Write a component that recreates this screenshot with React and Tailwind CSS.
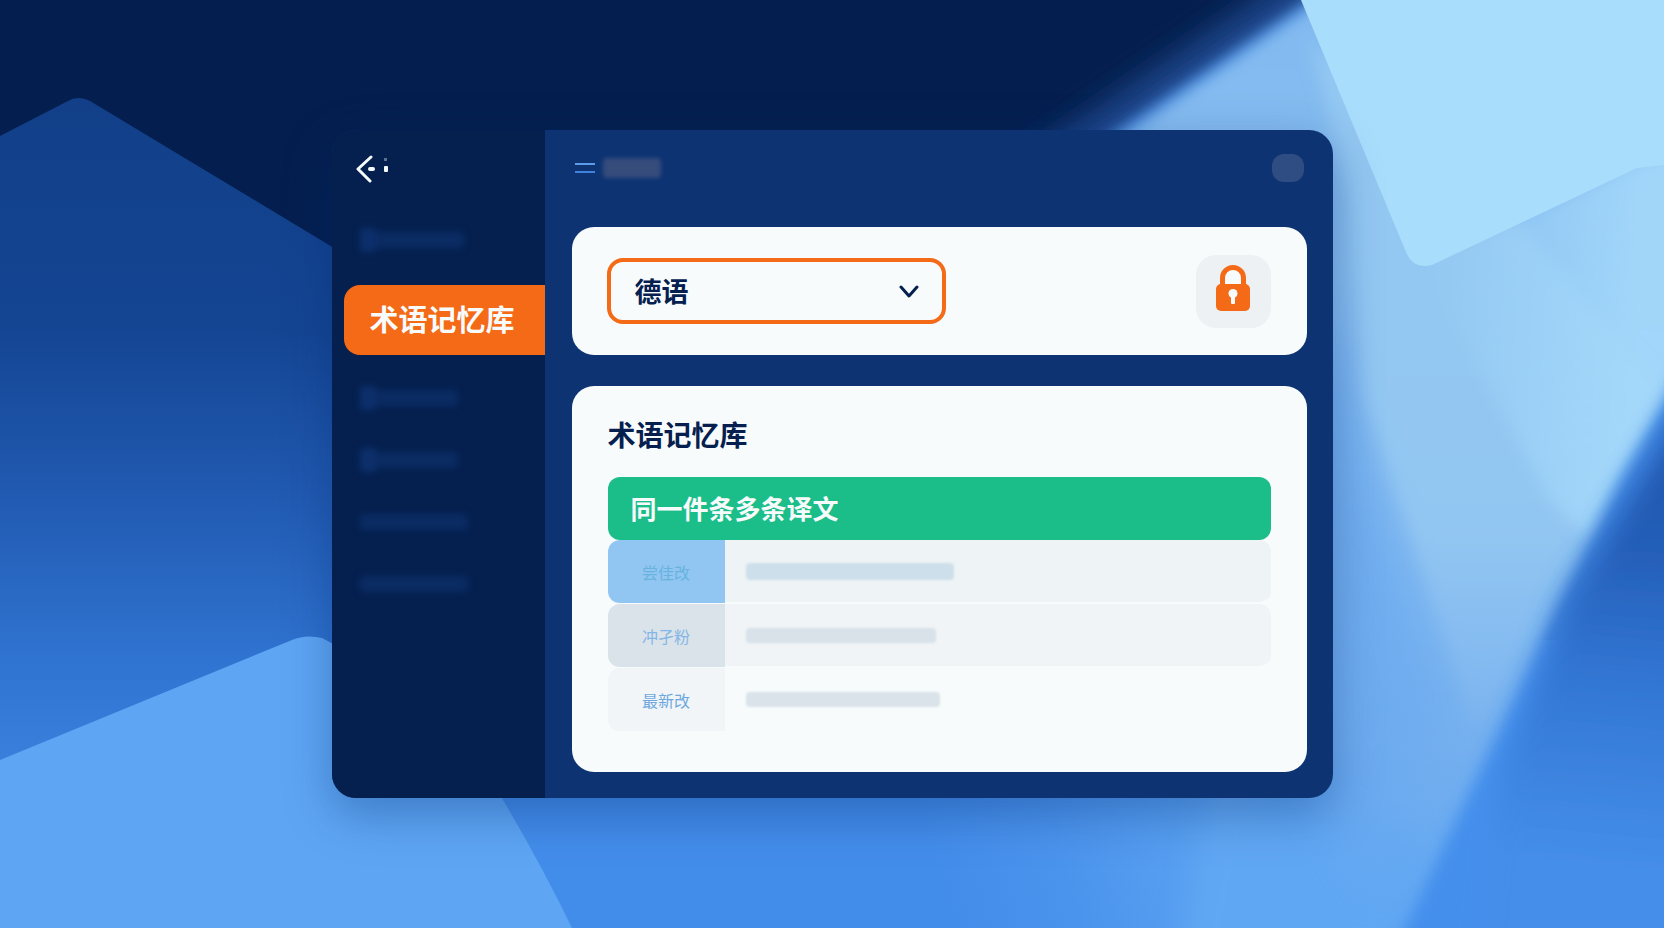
import React, { useState } from "react";

const navTop = [{ id: "nav-1", width: "w-[104px]", badge: true }];

const navBottom = [
  { id: "nav-2", width: "w-[98px]", badge: true },
  { id: "nav-3", width: "w-[98px]", badge: true },
  { id: "nav-4", width: "w-[108px]", badge: false },
  { id: "nav-5", width: "w-[108px]", badge: false },
];

const rows = [
  {
    id: "row-1",
    label: "尝佳改",
    labelClass: "bg-[#92c6f2] text-[#67b3de]",
    valueClass: "bg-[#eef3f5]",
    barClass: "w-[208px] h-[17px] bg-[#cddfeb]",
  },
  {
    id: "row-2",
    label: "冲孑粉",
    labelClass: "bg-[#d9e3e9] text-[#85b6e6]",
    valueClass: "bg-[#f0f4f6]",
    barClass: "w-[190px] h-[15px] bg-[#d8e2e8]",
  },
  {
    id: "row-3",
    label: "最新改",
    labelClass: "bg-[#f1f5f7] text-[#6fa8e0]",
    valueClass: "",
    barClass: "w-[194px] h-[15px] bg-[#dae3e9]",
  },
];

const Backdrop = () => (
  <svg
    className="absolute inset-0 -z-10 h-full w-full"
    viewBox="0 0 1664 928"
    preserveAspectRatio="xMidYMid slice"
    aria-hidden="true"
  >
    <defs>
      <linearGradient id="hill" x1="0" y1="98" x2="0" y2="760" gradientUnits="userSpaceOnUse">
        <stop offset="0" stopColor="#123f88" />
        <stop offset="0.35" stopColor="#144593" />
        <stop offset="0.62" stopColor="#225cb4" />
        <stop offset="0.85" stopColor="#3074d1" />
        <stop offset="1" stopColor="#397fdb" />
      </linearGradient>
      <linearGradient id="floor" x1="960" y1="960" x2="1260" y2="880" gradientUnits="userSpaceOnUse">
        <stop offset="0" stopColor="#438dea" />
        <stop offset="0.4" stopColor="#4b94ed" />
        <stop offset="1" stopColor="#5ea6f3" />
      </linearGradient>
      <linearGradient id="beam" x1="1400" y1="0" x2="1330" y2="928" gradientUnits="userSpaceOnUse">
        <stop offset="0" stopColor="#82baf0" />
        <stop offset="0.5" stopColor="#8ac0f1" />
        <stop offset="0.8" stopColor="#74afef" />
        <stop offset="1" stopColor="#60a6f3" />
      </linearGradient>
      <linearGradient id="wedge" x1="0" y1="300" x2="0" y2="760" gradientUnits="userSpaceOnUse">
        <stop offset="0" stopColor="#93c8f2" />
        <stop offset="0.5" stopColor="#92c6f2" />
        <stop offset="1" stopColor="#78b1ef" />
      </linearGradient>
      <linearGradient id="deep" x1="1640" y1="440" x2="1600" y2="860" gradientUnits="userSpaceOnUse">
        <stop offset="0" stopColor="#1f57ae" />
        <stop offset="0.25" stopColor="#245eb8" />
        <stop offset="0.55" stopColor="#3175d2" />
        <stop offset="1" stopColor="#448ee9" />
      </linearGradient>
      <linearGradient id="glow" x1="1430" y1="320" x2="1630" y2="330" gradientUnits="userSpaceOnUse">
        <stop offset="0" stopColor="#a8dcfc" stopOpacity="0" />
        <stop offset="1" stopColor="#a8dcfc" stopOpacity="0.8" />
      </linearGradient>
      <filter id="soft8" x="-20%" y="-20%" width="140%" height="140%">
        <feGaussianBlur stdDeviation="8" />
      </filter>
      <filter id="soft14" x="-20%" y="-20%" width="140%" height="140%">
        <feGaussianBlur stdDeviation="14" />
      </filter>
      <filter id="soft24" x="-30%" y="-30%" width="160%" height="160%">
        <feGaussianBlur stdDeviation="24" />
      </filter>
    </defs>

    <rect width="1664" height="928" fill="#041f4f" />
    <path d="M0 136 L68 101 Q78 95 90 101 L480 336 V928 H0 Z" fill="url(#hill)" />
    <rect x="440" y="640" width="1224" height="288" fill="url(#floor)" />

    {/* bright beam on the right */}
    <path d="M1330 -50 L990 180 L1180 400 L1500 0 Z" fill="#1c4488" filter="url(#soft14)" />
    <path d="M1385 -50 L1075 160 L1180 400 L1500 0 Z" fill="#3478d6" filter="url(#soft8)" />
    <g filter="url(#soft8)">
      <path d="M1390 -50 L1100 150 L1180 400 V700 L1240 860 L1200 960 H1390 L1760 240 V-50 Z" fill="url(#beam)" />
    </g>
    <path d="M1210 800 L1340 760 L1420 860 L1390 960 H1180 Z" fill="#61a7f3" filter="url(#soft14)" />
    <path d="M1333 300 L1440 700 L1380 900 L1320 800 L1300 400 Z" fill="#6caaf0" opacity="0.8" filter="url(#soft24)" />
    <path d="M1310 40 L1350 200 L1366 400 L1476 730 L1670 400 L1500 200 Z" fill="url(#wedge)" filter="url(#soft8)" />
    <path d="M1425 266 L1640 160 L1700 140 V340 L1590 540 L1550 500 Z" fill="url(#glow)" filter="url(#soft8)" />
    <path d="M1301 0 L1406 252 Q1413 270 1432 265 L1637 168 L1664 165 V0 Z" fill="#a9ddfc" />
    <g filter="url(#soft8)">
      <path d="M1700 340 L1620 480 L1500 730 L1390 960 H1700 Z" fill="#458fec" />
    </g>
    <g filter="url(#soft14)">
      <path d="M1720 350 L1644 470 L1565 600 L1500 780 L1480 960 H1720 Z" fill="url(#deep)" />
    </g>

    {/* lower left slab */}
    <path d="M0 760 L292 640 Q306 634 322 638 L440 700 Q520 820 572 928 H0 Z" fill="#5ea6f4" />
  </svg>
);

const BackIcon = () => (
  <svg width="36" height="28" viewBox="0 0 36 28" fill="none" stroke="#f7fbfc" strokeLinecap="round" strokeLinejoin="round">
    <path d="M15 2 L2 14 L14 26" strokeWidth="3" />
    <path d="M14 14 H17" strokeWidth="4" />
    <rect x="28" y="11" width="4" height="6" rx="1" fill="#f7fbfc" stroke="none" />
    <rect x="28" y="3" width="3" height="3" fill="#5d6f93" stroke="none" />
  </svg>
);

const LockIcon = () => (
  <svg className="-mt-1" width="36" height="48" viewBox="0 0 36 48" fill="none">
    <path d="M7.500 24 V13 a10.500 10.500 0 0 1 21 0 V24" fill="#f7fbfc" stroke="#f46a17" strokeWidth="5" />
    <rect x="1" y="19" width="34" height="27" rx="5" fill="#f46a17" />
    <circle cx="18" cy="28.500" r="4.500" fill="#f7fbfc" />
    <rect x="16" y="29" width="4" height="10" rx="1" fill="#f7fbfc" />
  </svg>
);

const GhostItem = ({ width, badge }) => (
  <li className="flex h-[62px] items-center pl-7">
    <span className={`relative block h-4 rounded bg-[#0a2b63] blur-[3px] ${width}`}>
      {badge && <span className="absolute -top-1 left-0 h-6 w-4 rounded bg-[#0c2f6b]" />}
    </span>
  </li>
);

const Sidebar = () => (
  <aside className="w-[213px] shrink-0 bg-[#05204f]">
    <button type="button" aria-label="返回" className="mt-[25px] ml-6 block">
      <BackIcon />
    </button>
    <nav className="mt-[26px]">
      <ul>
        {navTop.map((item) => (
          <GhostItem key={item.id} width={item.width} badge={item.badge} />
        ))}
        <li className="mt-3.5 mb-3 pl-3">
          <a
            href="#memory"
            aria-current="page"
            className="flex h-[70px] items-center rounded-l-2xl bg-[#f46a17] pb-0.5 pl-[26px] text-[29px] font-bold text-[#f7fbfc]"
          >
            术语记忆库
          </a>
        </li>
        {navBottom.map((item) => (
          <GhostItem key={item.id} width={item.width} badge={item.badge} />
        ))}
      </ul>
    </nav>
  </aside>
);

const App = () => {
  const [language, setLanguage] = useState("de");

  return (
    <div className="relative isolate flex min-h-screen items-center justify-center overflow-hidden px-6 py-10 font-['Noto_Sans_CJK_SC',sans-serif]">
      <Backdrop />

      <div className="flex w-full max-w-[1001px] overflow-hidden rounded-3xl bg-[#0d3373] shadow-[0_16px_48px_rgba(4,40,110,0.35)]">
        <Sidebar />

        <div className="min-w-0 flex-1 pt-6 pr-[26px] pb-[26px] pl-[27px]">
          <header className="flex h-7 items-center justify-between px-[3px]">
            <div className="flex items-center gap-2">
              <button type="button" aria-label="菜单" className="flex w-5 flex-col gap-1.5">
                <span className="h-0.5 w-full bg-[#5a9ce8]" />
                <span className="h-0.5 w-full bg-[#3f83dc]" />
              </button>
              <span className="h-5 w-[58px] rounded bg-[#364d7c] blur-[2px]" />
            </div>
            <span className="h-7 w-8 rounded-xl bg-[#2f4d82]" />
          </header>

          <main className="mt-[45px] space-y-[31px]">
            <section className="flex h-32 items-center justify-between rounded-[22px] bg-[#f7fbfc] pr-9 pl-[35px]">
              <div className="relative w-[339px]">
                <select
                  aria-label="语言"
                  value={language}
                  onChange={(e) => setLanguage(e.target.value)}
                  className="h-[66px] w-full appearance-none rounded-2xl border-4 border-[#f46a17] bg-transparent pl-6 text-[27px] font-bold text-[#05204f]"
                >
                  <option value="de">德语</option>
                </select>
                <svg
                  className="pointer-events-none absolute top-1/2 right-[25px] -translate-y-1/2"
                  width="22"
                  height="14"
                  viewBox="0 0 22 14"
                  fill="none"
                  stroke="#05204f"
                  strokeWidth="3"
                  strokeLinecap="round"
                  strokeLinejoin="round"
                >
                  <path d="M2 3 L10 12 L18 3" />
                </svg>
              </div>
              <button
                type="button"
                aria-label="锁定"
                className="flex h-[73px] w-[75px] items-center justify-center rounded-[20px] bg-[#edf1f4]"
              >
                <LockIcon />
              </button>
            </section>

            <section id="memory" className="rounded-[22px] bg-[#f7fbfc] px-9 pt-7 pb-10">
              <h2 className="text-[28px] leading-10 font-bold text-[#05204f]">术语记忆库</h2>
              <table className="mt-[23px] w-full border-separate border-spacing-0 text-left">
                <thead>
                  <tr>
                    <th
                      colSpan={2}
                      className="h-[63px] rounded-xl bg-[#1bbd88] pb-0.5 pl-[23px] text-[26px] leading-8 font-bold text-[#f7fbfc]"
                    >
                      同一件条多条译文
                    </th>
                  </tr>
                </thead>
                <tbody>
                  {rows.map((row) => (
                    <tr key={row.id}>
                      <th
                        scope="row"
                        className={`h-16 w-[117px] rounded-l-xl border-b border-[#f7fbfc] text-center text-base font-normal ${row.labelClass}`}
                      >
                        {row.label}
                      </th>
                      <td className={`rounded-r-xl border-b-2 border-[#f7fbfc] pl-[21px] ${row.valueClass}`}>
                        <span className={`block rounded-sm blur-[1px] ${row.barClass}`} />
                      </td>
                    </tr>
                  ))}
                </tbody>
              </table>
            </section>
          </main>
        </div>
      </div>
    </div>
  );
};

export default App;
